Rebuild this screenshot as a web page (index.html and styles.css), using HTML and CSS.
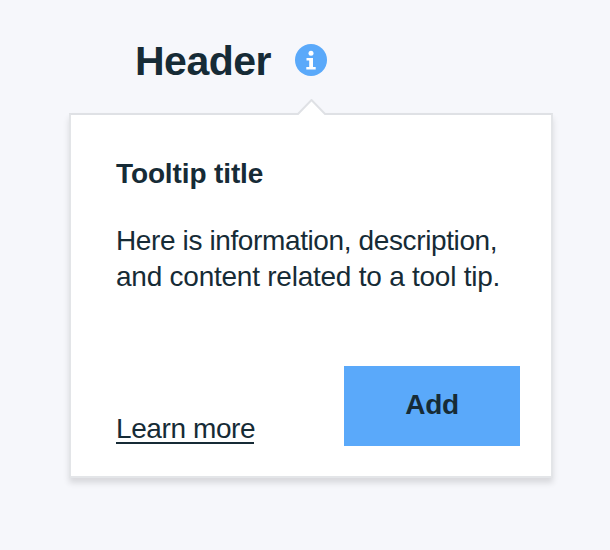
FILE: index.html
```html
<!DOCTYPE html>
<html lang="en">
<head>
<meta charset="utf-8">
<title>Tooltip</title>
<link rel="stylesheet" href="styles.css">
</head>
<body>
<header class="heading">
<h1 class="heading-text">Header</h1>
<svg class="info" viewBox="0 0 32 32" aria-hidden="true"><circle cx="16" cy="16" r="16" fill="#5aa9fa"/><circle cx="16" cy="9.3" r="2.5" fill="#fff"/><path d="M11.5 14H18v9h2.7v2.4h-9.4V23h2.9v-6.6h-2.7z" fill="#fff"/></svg>
</header>
<section class="tooltip">
<svg class="arrow" viewBox="0 0 30 17" aria-hidden="true"><path d="M0 17v-2h1L14.5 1 28 15h2v2z" fill="#fff"/><path d="M0 15h1L14.5 1 28 15h2" fill="none" stroke="#dfe1e5" stroke-width="2"/></svg>
<h2 class="title">Tooltip title</h2>
<p class="description"><span class="line line-one">Here is information, description,</span><span class="line line-two">and content related to a tool tip.</span></p>
<div class="actions"><a class="link" href="#">Learn more</a><button class="add">Add</button></div>
</section>
</body>
</html>
```
FILE: styles.css
```css
* { box-sizing: border-box; }
body { margin: 0; height: 550px; background: #f6f7fb; color: #162b36; font-family: "Liberation Sans", sans-serif; }
.heading { display: flex; align-items: flex-start; gap: 24px; height: 113px; padding: 8px 0 0 135px; }
.heading-text { margin: 30px 0 0; width: 135.5px; font-size: 41px; line-height: 46px; font-weight: 700; letter-spacing: -.5px; white-space: nowrap; }
.info { width: 32px; height: 32px; margin-top: 36px; }
.tooltip { position: relative; margin-left: 69px; width: 484px; height: 365px; padding: 42px 31px 30px 45px; background: #fff; border: 2px solid #e3e5e8; border-top-color: #dfe1e5; box-shadow: 0 5px 6px rgba(0,0,0,.12); }
.arrow { position: absolute; left: 226px; top: -16px; width: 30px; height: 17px; }
.title { margin: 0; font-size: 28px; line-height: 34px; letter-spacing: -.12px; }
.description { margin: 32px 0 0; font-size: 28px; line-height: 36px; }
.line { display: block; white-space: nowrap; }
.line-one { letter-spacing: -.38px; }
.line-two { letter-spacing: -.24px; }
.actions { display: flex; justify-content: space-between; align-items: flex-end; margin-top: 71px; height: 80px; }
.link { width: 138px; height: 30px; margin-bottom: 2px; color: inherit; font-size: 28px; line-height: 30px; letter-spacing: -.4px; white-space: nowrap; border-bottom: 2px solid #162b36; text-decoration: none; }
.add { width: 176px; height: 80px; padding: 0 0 3px; border: 0; background: #5aa9fa; color: #162b36; font: 700 28px "Liberation Sans", sans-serif; letter-spacing: -.3px; }
```
